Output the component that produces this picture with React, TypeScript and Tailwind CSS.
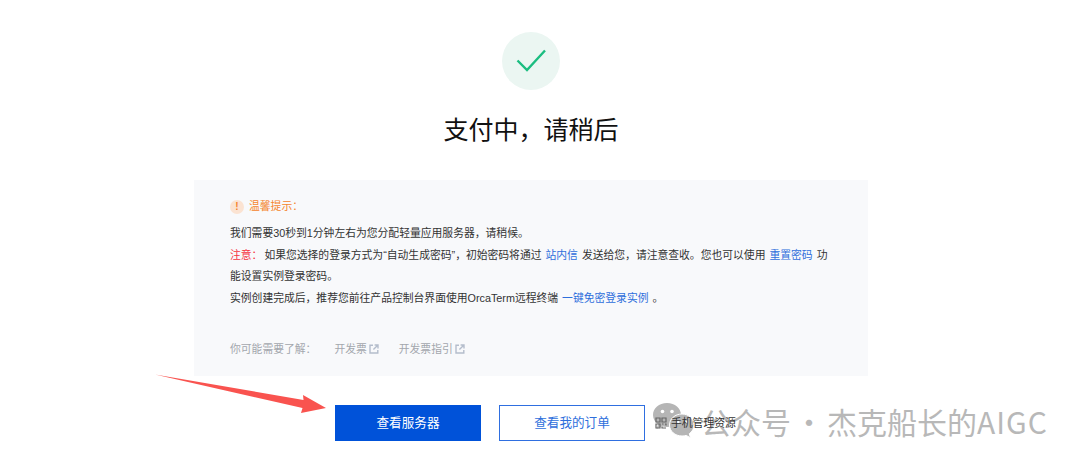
import { ReactNode } from 'react';

const cjk = 'font-["Liberation_Sans","Noto_Sans_CJK_SC",sans-serif]';

function ExternalIcon() {
  return (
    <svg width="10" height="10" viewBox="0 0 10 10" fill="none" stroke="#b4bdcc" strokeWidth="1.4" className="ml-[2px]">
      <path d="M4 1.2H1v7.800h7.800V6" />
      <path d="M5.600 1h3.400v3.400M9 1 4.400 5.600" />
    </svg>
  );
}

function Link({ children }: { children: ReactNode }) {
  return <span className="text-[#2f6fdc] mx-[4px]">{children}</span>;
}

function Arrow() {
  return (
    <svg className="absolute left-[150px] top-[368px]" width="190" height="52" viewBox="150 368 190 52">
      <polygon points="155,374.500 303.500,400 303,395 326,408 301,413 302.500,408" fill="#f9534f" />
    </svg>
  );
}

function Watermark() {
  return (
    <div className="absolute left-[652px] top-[401px] flex items-center">
      <svg width="46" height="40" viewBox="0 0 46 40">
        <path d="M15 2C7 2 1 7.300 1 14c0 3.800 2 7 5 9.200L4.500 28l5.200-2.700c1.700.5 3.400.7 5.300.7 8 0 14-5.300 14-12S23 2 15 2Z" fill="#b5b5b5" />
        <circle cx="10.500" cy="10.500" r="1.800" fill="#fff" />
        <circle cx="20" cy="10.500" r="1.800" fill="#fff" />
        <path d="M30 13c-7 0-12.500 4.800-12.500 11S23 35 30 35c1.500 0 2.900-.2 4.200-.6l4.300 2.400-1.200-4.100c2.900-2 4.700-5 4.700-8.700 0-6.200-5.500-11-12-11Z" fill="#b5b5b5" stroke="#fff" strokeWidth="1" />
        <circle cx="26" cy="21" r="1.500" fill="#fff" />
        <circle cx="34" cy="21" r="1.500" fill="#fff" />
      </svg>
      <span className='ml-[3px] flex items-center text-[30px] leading-none text-[#b8b8b8] font-["Noto_Sans_CJK_SC",sans-serif] whitespace-nowrap'>
        公众号
        <span className="w-[36px] text-center">·</span>
        杰克船长的<span className="tracking-[1px]">AIGC</span>
      </span>
    </div>
  );
}

export default function App() {
  return (
    <div className={`relative w-[1080px] h-[465px] overflow-hidden bg-white flex flex-col items-center pt-[32px] ${cjk}`}>
      <div className="w-[58px] h-[58px] rounded-full bg-[#ebf6f2] flex items-center justify-center mr-[18px]">
        <svg width="32" height="26" viewBox="0 0 32 26" fill="none">
          <path d="M2.500 12.500 12 22 30 2.500" stroke="#1bbd80" strokeWidth="2.400" />
        </svg>
      </div>

      <h1 className='mt-[19px] mr-[18px] text-[25px] leading-[38px] text-[#111] font-["Noto_Sans_CJK_SC",sans-serif] font-normal'>
        支付中，请稍后
      </h1>

      <section className="mt-[33px] mr-[18px] w-[674px] h-[196px] bg-[#f8f9fb] pl-[36px] pr-[36px] pt-[17px] text-[10.800px] text-[#333]">
        <div className="flex items-center h-[19px] text-[#f5852d]">
          <span className="w-[14px] h-[14px] mr-[5px] rounded-full bg-[#fbe3d2] flex items-center justify-center text-[10px] font-bold text-[#f5852d]">
            !
          </span>
          温馨提示：
        </div>
        <div className="mt-[7px] leading-[21.700px]">
          <p>我们需要30秒到1分钟左右为您分配轻量应用服务器，请稍候。</p>
          <p>
            <span className="text-[#f5343f] mr-[2px]">注意：</span>
            如果您选择的登录方式为“自动生成密码”，初始密码将通过<Link>站内信</Link>发送给您，请注意查收。您也可以使用<Link>重置密码</Link>功能设置实例登录密码。
          </p>
          <p>
            实例创建完成后，推荐您前往产品控制台界面使用OrcaTerm远程终端<Link>一键免密登录实例</Link>。
          </p>
        </div>
        <div className="mt-[31px] flex items-center text-[#a3a7ad]">
          <span className="mr-[18px]">你可能需要了解：</span>
          <span>开发票</span>
          <ExternalIcon />
          <span className="ml-[20px]">开发票指引</span>
          <ExternalIcon />
        </div>
      </section>

      <div className="mt-[29px] w-full pl-[335px] flex gap-[18px] text-[12.600px]">
        <button className="w-[146px] h-[36px] bg-[#0052d9] text-white">查看服务器</button>
        <button className="w-[146px] h-[36px] border border-[#2f6fe0] text-[#2f6fdc]">查看我的订单</button>
        <div className="relative z-10 flex items-center -ml-[8px] text-[10.800px] text-[#333]">
          <svg width="12" height="12" viewBox="0 0 12 12" fill="none" stroke="#666" strokeWidth="1.200" className="mr-[4px]">
            <path d="M1 1h4v4H1zM7 1h4v4H7zM1 7h4v4H1zM7 7h1.500M10 7h1v1.500M7 9.500V11h4" />
          </svg>
          手机管理资源
        </div>
      </div>

      <Watermark />
      <Arrow />
    </div>
  );
}
